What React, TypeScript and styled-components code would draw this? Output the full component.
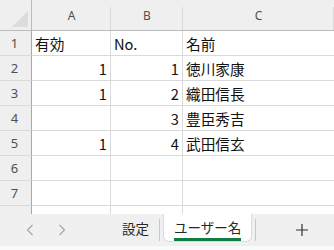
import styled, { createGlobalStyle } from "styled-components";

const GlobalStyle = createGlobalStyle`
  html, body {
    margin: 0;
    padding: 0;
    background: #ffffff;
  }
  body {
    font-family: "Noto Sans CJK JP", "Noto Sans", sans-serif;
    color: #1f1f1f;
  }
`;

type Row = {
  active: string;
  no: string;
  name: string;
};

const rows: Row[] = [
  { active: "有効", no: "No.", name: "名前" },
  { active: "1", no: "1", name: "徳川家康" },
  { active: "1", no: "2", name: "織田信長" },
  { active: "", no: "3", name: "豊臣秀吉" },
  { active: "1", no: "4", name: "武田信玄" },
  { active: "", no: "", name: "" },
  { active: "", no: "", name: "" },
  { active: "", no: "", name: "" },
];

// only the first seven row numbers fit above the tab bar
const visibleLabels = 7;

const Window = styled.div`
  width: 334px;
  height: 250px;
  display: flex;
  flex-direction: column;
  overflow: hidden;
`;

const Sheet = styled.div`
  height: 214px;
  overflow: hidden;
  display: grid;
  grid-template-columns: 32px 79px 72px 1fr;
  grid-auto-rows: 25px;
  grid-template-rows: 31px;
`;

const Corner = styled.div`
  background: #efefef;
  border-right: 1px solid #bcbcbc;
  border-bottom: 1px solid #bcbcbc;
  display: flex;
  align-items: flex-end;
  justify-content: flex-end;
  padding: 0 3px 3px 0;
`;

const ColHeader = styled.div`
  background:
    linear-gradient(#d9d9d9, #d9d9d9) right bottom / 1px 23px no-repeat,
    #efefef;
  border-bottom: 1px solid #bcbcbc;
  display: flex;
  align-items: center;
  justify-content: center;
  font-family: "Noto Sans", "Liberation Sans", sans-serif;
  font-size: 12px;
  color: #505050;
`;

const RowHeader = styled.div`
  background: #efefef;
  border-right: 1px solid #a8a8a8;
  border-bottom: 1px solid #d9d9d9;
  display: flex;
  align-items: center;
  justify-content: center;
  padding-right: 2px;
  font-family: "Noto Sans", "Liberation Sans", sans-serif;
  font-size: 13px;
  color: #505050;
`;

const Cell = styled.div<{ $align: "left" | "right"; $last?: boolean }>`
  border-right: ${(p) => (p.$last ? "none" : "1px solid #dadada")};
  border-bottom: 1px solid #dadada;
  display: flex;
  align-items: center;
  justify-content: ${(p) => (p.$align === "right" ? "flex-end" : "flex-start")};
  padding: 1px 3px 0;
  font-size: 14.67px;
  color: #111111;
  white-space: nowrap;
  overflow: hidden;
`;

const TabBar = styled.div`
  flex: 1;
  display: flex;
  flex-direction: column;
  background: #fafafa;
`;

const TabRow = styled.div`
  height: 32px;
  display: flex;
  align-items: stretch;
  background: #f0f0f0;
`;

const Nav = styled.div`
  width: 112px;
  display: flex;
  align-items: center;
  padding-left: 14px;
  box-sizing: border-box;
`;

const NavButton = styled.div`
  width: 32px;
  height: 100%;
  display: flex;
  align-items: center;
  justify-content: center;
  color: #a6a6a6;
`;

const Tab = styled.div<{ $active?: boolean }>`
  display: flex;
  flex-direction: column;
  align-items: center;
  justify-content: center;
  padding: 0 10px;
  font-size: 13.5px;
  color: #262626;
  background: ${(p) => (p.$active ? "#ffffff" : "transparent")};
  border: ${(p) => (p.$active ? "1px solid #dcdcdc" : "none")};
  border-top: none;
  border-radius: ${(p) => (p.$active ? "0 0 6px 6px" : "0")};
  margin: ${(p) => (p.$active ? "0 3px 4px" : "0")};
`;

const TabLabel = styled.span<{ $active?: boolean }>`
  line-height: 18px;
  padding-bottom: 2px;
  border-bottom: 3px solid ${(p) => (p.$active ? "#137c43" : "transparent")};
  margin-top: ${(p) => (p.$active ? "4px" : "0")};
`;

const Divider = styled.div`
  width: 1px;
  align-self: center;
  height: 22px;
  background: #c8c8c8;
`;

const AddButton = styled.div`
  width: 30px;
  margin-left: 31px;
  display: flex;
  align-items: center;
  justify-content: center;
  color: #333333;
`;

const Chevron = ({ dir }: { dir: "left" | "right" }) => (
  <svg width="8" height="12" viewBox="0 0 8 12" fill="none">
    <path
      d={dir === "left" ? "M6.5 1 L1.5 6 L6.5 11" : "M1.5 1 L6.5 6 L1.5 11"}
      stroke="currentColor"
      strokeWidth="1.2"
    />
  </svg>
);

export default function App() {
  return (
    <>
      <GlobalStyle />
      <Window>
        <Sheet>
          <Corner>
            <svg width="16" height="16" viewBox="0 0 16 16">
              <polygon points="0,16 16,0 16,16" fill="#dcdcdc" />
            </svg>
          </Corner>
          <ColHeader>A</ColHeader>
          <ColHeader>B</ColHeader>
          <ColHeader>C</ColHeader>
          {rows.map((row, i) => {
            const header = i === 0;
            return [
              <RowHeader key={`h${i}`}>{i < visibleLabels ? i + 1 : ""}</RowHeader>,
              <Cell key={`a${i}`} $align={header ? "left" : "right"}>
                {row.active}
              </Cell>,
              <Cell key={`b${i}`} $align={header ? "left" : "right"}>
                {row.no}
              </Cell>,
              <Cell key={`c${i}`} $align="left" $last>
                {row.name}
              </Cell>,
            ];
          })}
        </Sheet>
        <TabBar>
          <TabRow>
            <Nav>
              <NavButton>
                <Chevron dir="left" />
              </NavButton>
              <NavButton>
                <Chevron dir="right" />
              </NavButton>
            </Nav>
            <Tab>
              <TabLabel>設定</TabLabel>
            </Tab>
            <Divider />
            <Tab $active>
              <TabLabel $active>ユーザー名</TabLabel>
            </Tab>
            <Divider />
            <AddButton>
              <svg width="12" height="12" viewBox="0 0 12 12">
                <path d="M6 0 V12 M0 6 H12" stroke="currentColor" strokeWidth="1.2" />
              </svg>
            </AddButton>
          </TabRow>
        </TabBar>
      </Window>
    </>
  );
}
